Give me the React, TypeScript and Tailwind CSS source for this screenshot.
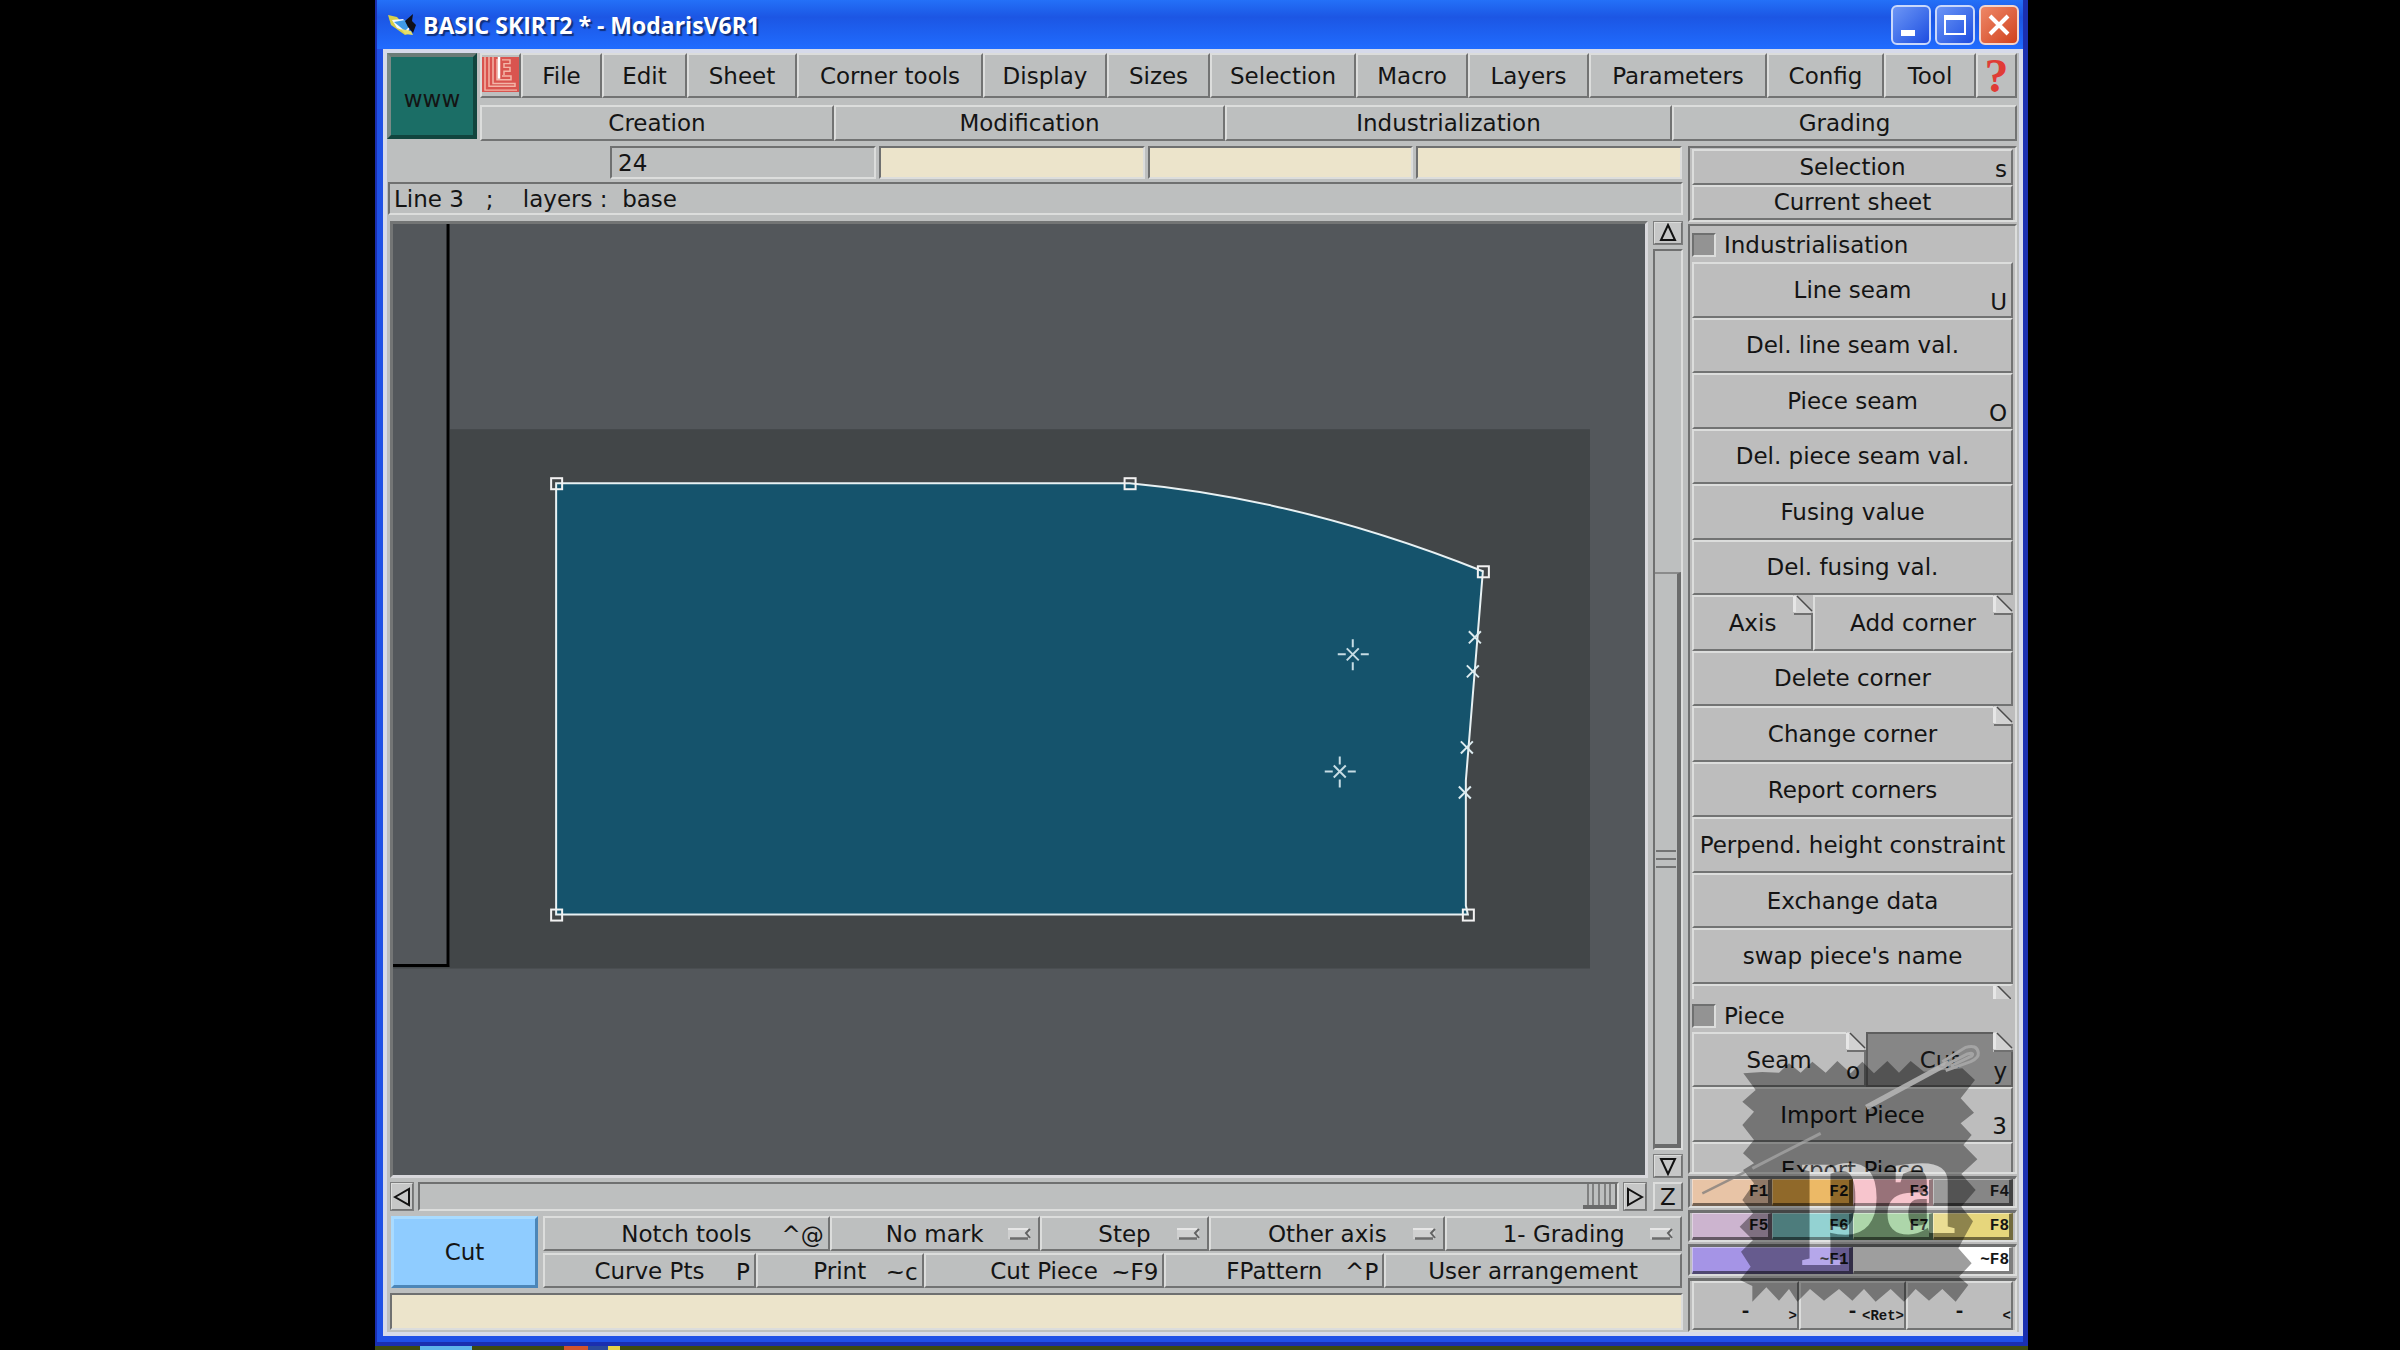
import { useState, type ReactNode } from 'react'

const RAISED =
  'border-2 border-t-[#dcdddc] border-l-[#dcdddc] border-r-[#727373] border-b-[#727373]'
const SUNKEN =
  'border-2 border-t-[#6f7070] border-l-[#6f7070] border-r-[#dcdddc] border-b-[#dcdddc]'

const MENUS = [
  { label: 'File', width: 'flex-77' },
  { label: 'Edit', width: 'flex-81' },
  { label: 'Sheet', width: 'flex-106' },
  { label: 'Corner tools', width: 'flex-182' },
  { label: 'Display', width: 'flex-120' },
  { label: 'Sizes', width: 'flex-99' },
  { label: 'Selection', width: 'flex-142' },
  { label: 'Macro', width: 'flex-108' },
  { label: 'Layers', width: 'flex-117' },
  { label: 'Parameters', width: 'flex-174' },
  { label: 'Config', width: 'flex-113' },
  { label: 'Tool', width: 'flex-88' },
]

const MODES = [
  { label: 'Creation', width: 'flex-350' },
  { label: 'Modification', width: 'flex-387' },
  { label: 'Industrialization', width: 'flex-443' },
  { label: 'Grading', width: 'flex-341' },
]

type Tool = {
  label: string
  width?: string
  hint?: string
  option?: boolean
  fold?: boolean
}

const TOOLBAR: Tool[][] = [
  [
    { label: 'Notch tools', width: 'flex-283', hint: '^@' },
    { label: 'No mark', width: 'flex-206', option: true },
    { label: 'Step', width: 'flex-166', option: true },
    { label: 'Other axis', width: 'flex-232', option: true },
    { label: '1- Grading', width: 'flex-233', option: true },
  ],
  [
    { label: 'Curve Pts', width: 'flex-209', hint: 'P' },
    { label: 'Print', width: 'flex-164', hint: '~c' },
    { label: 'Cut Piece', width: 'flex-237', hint: '~F9' },
    { label: 'FPattern', width: 'flex-216', hint: '^P' },
    { label: 'User arrangement', width: 'flex-294' },
  ],
]

const INDUSTRIALISATION: Tool[][] = [
  [{ label: 'Line seam', hint: 'U' }],
  [{ label: 'Del. line seam val.' }],
  [{ label: 'Piece seam', hint: 'O' }],
  [{ label: 'Del. piece seam val.' }],
  [{ label: 'Fusing value' }],
  [{ label: 'Del. fusing val.' }],
  [
    { label: 'Axis', width: 'flex-117', fold: true },
    { label: 'Add corner', width: 'flex-196', fold: true },
  ],
  [{ label: 'Delete corner' }],
  [{ label: 'Change corner', fold: true }],
  [{ label: 'Report corners' }],
  [{ label: 'Perpend. height constraint' }],
  [{ label: 'Exchange data' }],
  [{ label: "swap piece's name" }],
]

const FUNCTION_KEYS = [
  [
    { label: 'F1', color: 'bg-[#e8c4a6]' },
    { label: 'F2', color: 'bg-[#e8aa45]' },
    { label: 'F3', color: 'bg-[#f6b9c3]' },
    { label: 'F4', color: 'bg-[#868686]' },
  ],
  [
    { label: 'F5', color: 'bg-[#ccb4cf]' },
    { label: 'F6', color: 'bg-[#7cc8c8]' },
    { label: 'F7', color: 'bg-[#9bce98]' },
    { label: 'F8', color: 'bg-[#e6d67c]' },
  ],
  [
    { label: '~F1', color: 'bg-[#a594e6]' },
    { label: '~F8', color: 'bg-white' },
  ],
]

function Fold() {
  return (
    <svg
      className="absolute -top-0.5 -right-0.5"
      width="20"
      height="20"
      viewBox="0 0 20 20"
      aria-hidden="true"
    >
      <path d="M0 0H20V20H0z" fill="#bdbdbd" />
      <path d="M1 0H4L18 15V18H1z" fill="#d2d2d2" />
      <path d="M1.500 1V17" stroke="#e6e6e6" strokeWidth="3" />
      <path d="M4 1L19 16" stroke="#4b4b4b" strokeWidth="1.500" />
      <path d="M1 19H20" stroke="#707070" strokeWidth="2" />
    </svg>
  )
}

function OptionMark() {
  return (
    <svg
      className="absolute right-1.5 top-1/2 -translate-y-1/2"
      width="24"
      height="12"
      viewBox="0 0 24 12"
      aria-hidden="true"
    >
      <path d="M0 0H22V11H0z" fill="#cfd0d0" />
      <path d="M0 1H20" stroke="#e6e6e6" strokeWidth="2" />
      <path d="M2 10.500H20" stroke="#6c6d6d" strokeWidth="2.500" />
      <path d="M22 1L18 5L22 10" fill="none" stroke="#626363" strokeWidth="2" />
    </svg>
  )
}

function ToolButton({ label, width = 'flex-1', hint, option, fold }: Tool) {
  return (
    <button
      className={`relative min-w-0 whitespace-nowrap ${width} ${RAISED}`}
      aria-haspopup={option ? 'menu' : undefined}
    >
      {label}
      {hint && <span className="absolute right-1 bottom-0">{hint}</span>}
      {option && <OptionMark />}
      {fold && <Fold />}
    </button>
  )
}

function Section({ id, label }: { id: string; label: string }) {
  const [open, setOpen] = useState(false)
  return (
    <div className="flex shrink-0 items-center gap-2">
      <input
        id={id}
        type="checkbox"
        checked={open}
        onChange={(e) => setOpen(e.target.checked)}
        className={`size-6 appearance-none bg-[#939393] ${SUNKEN}`}
      />
      <label htmlFor={id}>{label}</label>
    </div>
  )
}

function ScrollArrow({ label, d, size }: { label: string; d: string; size: string }) {
  return (
    <button
      aria-label={label}
      className={`flex shrink-0 items-center justify-center bg-[#c6c7c7] outline outline-1 -outline-offset-1 outline-[#7d7e7e] ${size} ${RAISED}`}
    >
      <svg width="20" height="20" viewBox="0 0 20 20" aria-hidden="true">
        <path d={d} fill="none" stroke="#111" strokeWidth="2" />
      </svg>
    </button>
  )
}

function TitleBar() {
  return (
    <header className="flex h-[49px] items-center justify-between bg-linear-to-b from-[#2470f8] via-[#1c56e4] via-35% to-[#206cff] pr-1 pl-2.5">
      <div className="flex items-center gap-1.5">
        <svg width="30" height="24" viewBox="0 0 30 24" aria-hidden="true">
          <path d="M1 2L10 4L24 20L18 22L4 12z" fill="#d8d04a" />
          <path d="M5 7L16 6L24 14L20 19L10 15z" fill="#f4f8ff" />
          <path d="M7 9L18 7L23 13L18 18z" fill="#3f9be8" />
          <path d="M18 8L26 1L25 8L29 12L26 20L21 14z" fill="#101018" />
          <path d="M14 16L24 18L26 22L18 21z" fill="#e6df6a" />
        </svg>
        <h1 className="font-['Open_Sans','Noto_Sans',sans-serif] text-[23px] font-bold whitespace-nowrap text-white [text-shadow:2px_2px_1px_#10307c]">
          BASIC SKIRT2 * - ModarisV6R1
        </h1>
      </div>
      <div className="flex gap-1">
        <button
          aria-label="Minimize"
          className="size-10 rounded-md border-2 border-[#c9d8fb] bg-linear-to-br from-[#6d95f5] to-[#1e4be0] pt-4 pl-2"
        >
          <span className="block h-1.5 w-3.5 bg-white" />
        </button>
        <button
          aria-label="Maximize"
          className="flex size-10 items-center justify-center rounded-md border-2 border-[#c9d8fb] bg-linear-to-br from-[#6d95f5] to-[#1e4be0]"
        >
          <span className="block h-5 w-5.5 border-2 border-t-5 border-white" />
        </button>
        <button
          aria-label="Close"
          className="flex size-10 items-center justify-center rounded-md border-2 border-[#f3d5cc] bg-linear-to-br from-[#ee8766] to-[#d0401a]"
        >
          <svg width="24" height="24" viewBox="0 0 24 24" aria-hidden="true">
            <path d="M3 3L21 21M21 3L3 21" stroke="#fff" strokeWidth="4" />
          </svg>
        </button>
      </div>
    </header>
  )
}

function Menus() {
  return (
    <div className="flex gap-[3px] pr-0.5">
      <button className="h-[86px] w-[90px] shrink-0 border-4 border-t-[#6b7c77] border-r-[#11453e] border-b-[#11453e] border-l-[#7a8a86] bg-[#1b6e66] pt-1.5">
        www
      </button>
      <div className="flex min-w-0 flex-1 flex-col gap-[7px]">
        <nav className="flex h-[45px]">
          <button aria-label="About" className={`min-w-0 flex-37 pt-0.5 pb-1 ${RAISED}`}>
            <svg
              className="h-full w-full"
              viewBox="0 0 37 37"
              preserveAspectRatio="none"
              aria-hidden="true"
            >
              <path d="M0 0H37V37H0z" fill="#d9544f" />
              <g fill="none" stroke="#f3b5a8" strokeWidth="1.500">
                <path d="M3 0V35H35" />
                <path d="M7 0V31H33V28H11V0" />
                <path d="M15 2V24H29V20H20" />
                <path d="M20 3H28V7H22V11H28V15H22V19" />
              </g>
              <path d="M17 0V23" stroke="#fff" strokeWidth="2.500" />
            </svg>
          </button>
          {MENUS.map((m) => (
            <button key={m.label} className={`min-w-0 whitespace-nowrap ${m.width} ${RAISED}`}>
              {m.label}
            </button>
          ))}
          <button
            className={`min-w-0 flex-37 font-['Liberation_Serif',serif] text-[48px] leading-10 font-bold text-[#e03c36] ${RAISED}`}
          >
            ?
          </button>
        </nav>
        <nav className="flex h-9">
          {MODES.map((m) => (
            <button key={m.label} className={`min-w-0 ${m.width} ${RAISED}`}>
              {m.label}
            </button>
          ))}
        </nav>
      </div>
    </div>
  )
}

const HANDLES = [
  [556, 483],
  [1129, 483],
  [1482, 571],
  [1467, 914],
  [556, 914],
]
const NOTCHES = [
  [1474, 637],
  [1472, 671],
  [1466, 747],
  [1464, 792],
]
const MARKS = [
  [1352, 654],
  [1339, 771],
]

function Drawing() {
  return (
    <div className="flex min-w-0 flex-1 border-3 border-t-[#737575] border-r-[#d8d8dc] border-b-[#d8d8dc] border-l-[#737575] bg-[#53575b]">
      <svg
        className="min-h-0 w-full flex-1"
        viewBox="393 224 1251 946"
        preserveAspectRatio="xMinYMin meet"
        role="img"
        aria-label="Skirt pattern piece"
      >
        <path d="M450 429H1589V968H393V965H450z" fill="#424648" />
        <path d="M393 965H448V223" fill="none" stroke="#000" strokeWidth="3" />
        <path
          d="M556 483H1129Q1302 499 1482 571L1465 780V905L1467 914H556z"
          fill="#15536c"
          stroke="#e8f1f3"
          strokeWidth="2"
        />
        {HANDLES.map(([x, y]) => (
          <rect
            key={`${x}-${y}`}
            x={x - 5}
            y={y - 5}
            width="11"
            height="11"
            fill="none"
            stroke="#f2f2f2"
            strokeWidth="2"
          />
        ))}
        {NOTCHES.map(([x, y]) => (
          <path
            key={`${x}-${y}`}
            d={`M${x - 6} ${y - 6}l12 12m0 -12l-12 12`}
            stroke="#dcebef"
            strokeWidth="2"
          />
        ))}
        {MARKS.map(([x, y]) => (
          <path
            key={`${x}-${y}`}
            d={`M${x - 6} ${y - 6}l12 12m0 -12l-12 12M${x - 15} ${y}h8m15 0h8M${x} ${y - 15}v8m0 15v8`}
            stroke="#c6dce4"
            strokeWidth="2"
          />
        ))}
      </svg>
    </div>
  )
}

function VerticalScroll() {
  return (
    <div className="flex w-[30px] shrink-0 flex-col gap-1">
      <ScrollArrow label="Scroll up" d="M10 2L17 17H3z" size="h-6" />
      <div className={`flex flex-1 flex-col ${SUNKEN}`}>
        <div className="flex-36" />
        <div className="flex flex-64 flex-col items-center justify-center gap-1.5 border-t-2 border-r-4 border-b-4 border-t-[#8a8b8b] border-r-[#6a6b6b] border-b-[#6a6b6b]">
          <span className="h-0.5 w-5 bg-[#727373]" />
          <span className="h-0.5 w-5 bg-[#727373]" />
          <span className="h-0.5 w-5 bg-[#727373]" />
        </div>
      </div>
      <ScrollArrow label="Scroll down" d="M10 18L17 3H3z" size="h-6" />
    </div>
  )
}

function HorizontalScroll() {
  return (
    <div className="mt-1 flex h-[29px] gap-1 pr-0.5 pl-[3px]">
      <ScrollArrow label="Scroll left" d="M3 10L17 2V18z" size="w-6" />
      <div className={`flex flex-1 justify-end ${SUNKEN}`}>
        <div className="flex w-[34px] justify-evenly border-r-2 border-b-4 border-[#6a6b6b]">
          <span className="w-0.5 bg-[#808181]" />
          <span className="w-0.5 bg-[#808181]" />
          <span className="w-0.5 bg-[#808181]" />
          <span className="w-0.5 bg-[#808181]" />
          <span className="w-0.5 bg-[#808181]" />
        </div>
      </div>
      <ScrollArrow label="Scroll right" d="M17 10L3 2V18z" size="w-6" />
      <button className={`ml-0.5 w-[30px] leading-6 ${RAISED}`}>Z</button>
    </div>
  )
}

function Workspace() {
  const [size, setSize] = useState('24')
  return (
    <div className="flex min-w-0 flex-1 flex-col pb-0.5">
      <div className="mt-0.5 grid h-[33px] grid-cols-4 gap-[3px] pr-[3px] pl-[223px]">
        <input
          aria-label="Size"
          value={size}
          onChange={(e) => setSize(e.target.value)}
          className={`min-w-0 px-1.5 ${SUNKEN}`}
        />
        <input aria-label="Value 1" className={`min-w-0 bg-[#ece4cb] ${SUNKEN}`} />
        <input aria-label="Value 2" className={`min-w-0 bg-[#ece4cb] ${SUNKEN}`} />
        <input aria-label="Value 3" className={`min-w-0 bg-[#ece4cb] ${SUNKEN}`} />
      </div>
      <p
        className={`mt-[3px] mr-0.5 ml-px h-[33px] px-1 leading-[31px] whitespace-pre ${SUNKEN}`}
      >
        {'Line 3   ;    layers :  base'}
      </p>
      <div className="mt-1.5 flex flex-1 gap-[5px] pr-0.5 pl-[3px]">
        <Drawing />
        <VerticalScroll />
      </div>
      <HorizontalScroll />
      <div className="mt-[5px] flex h-[72px] gap-[5px] pr-[3px] pl-1">
        <button className="w-[147px] shrink-0 border-3 border-t-[#a9dbff] border-r-[#4c86b8] border-b-[#4c86b8] border-l-[#a9dbff] bg-[#8fccff]">
          Cut
        </button>
        <div className="flex min-w-0 flex-1 flex-col gap-0.5">
          {TOOLBAR.map((row, i) => (
            <div key={i} className="flex flex-1">
              {row.map((tool) => (
                <ToolButton key={tool.label} {...tool} />
              ))}
            </div>
          ))}
        </div>
      </div>
      <input
        aria-label="Message"
        className={`mt-[5px] mr-0.5 ml-[3px] h-[37px] bg-[#ece4cb] ${SUNKEN}`}
      />
    </div>
  )
}

function Panel({ className = '', children }: { className?: string; children: ReactNode }) {
  return (
    <div className={`flex flex-col px-0.5 ${SUNKEN} ${className}`}>{children}</div>
  )
}

// Pinked fabric swatch held by a safety pin
function Watermark() {
  return (
    <svg
      className="pointer-events-none absolute right-4.5 bottom-3 h-[290px] w-[270px]"
      viewBox="0 0 810 870"
      overflow="visible"
    >
      <mask id="swatch">
        <path d="M0 0H810V870H0z" fill="#fff" />
        <text
          id="monogram"
          x="214"
          y="608"
          fontSize="444"
          fontWeight="700"
          fontFamily="Liberation Serif, serif"
        >
          pa
        </text>
      </mask>
      <path
        mask="url(#swatch)"
        fill="#000"
        fillOpacity="0.380"
        d="M43 130L100 126L150 128L180 100L215 128L250 95L290 128L325 93L365 130L400 95L435 130L475 93L510 128L545 93L585 125L700 115L738 150L695 205L735 248L695 280L728 315L703 345L745 388L697 432L740 480L697 530L732 574L688 655L728 700L690 740L718 765L680 815L640 777L600 812L560 777L525 815L485 777L440 815L405 777L370 812L330 777L285 812L243 777L205 815L180 777L150 812L112 772L70 815V768L33 750L65 710L36 665L72 630L32 590L72 550L40 510L75 460L42 420L75 400L42 370L75 330L40 285L75 245L40 215L80 180z"
      />
      <mask id="letters">
        <use href="#monogram" className="invert" />
      </mask>
      <path d="M0 0H810V870H0z" fill="#fff" fillOpacity="0.180" mask="url(#letters)" />
      <path d="M-80 490L70 415" stroke="#777" strokeOpacity="0.700" strokeWidth="7" />
      <path d="M70 415L275 310" stroke="#aaa" strokeOpacity="0.700" strokeWidth="9" />
      <path d="M412 232L660 98" stroke="#b4b4b4" strokeOpacity="0.900" strokeWidth="16" />
      <path
        d="M640 95L710 52Q744 42 748 68Q750 84 725 95L650 122M650 105L715 72Q738 66 728 78L665 108"
        fill="none"
        stroke="#a4a4a4"
        strokeWidth="9"
      />
    </svg>
  )
}

function SidePanel() {
  return (
    <aside className="relative mr-0.5 flex w-[329px] shrink-0 flex-col gap-0.5 bg-[#bdbdbd] pt-0.5">
      <Panel className="h-[76px] pt-px">
        <div className="flex flex-1">
          <ToolButton label="Selection" hint="s" />
        </div>
        <div className="flex flex-1">
          <ToolButton label="Current sheet" />
        </div>
      </Panel>
      <Panel className="flex-1">
        <div className="flex h-9 items-center pt-0.5">
          <Section id="industrialisation" label="Industrialisation" />
        </div>
        <div className="flex flex-1 flex-col">
          {INDUSTRIALISATION.map((row) => (
            <div key={row[0].label} className="flex flex-1">
              {row.map((tool) => (
                <ToolButton key={tool.label} {...tool} />
              ))}
            </div>
          ))}
        </div>
        <div className="relative h-[15px] overflow-hidden border-2 border-b-0 border-t-[#dcdddc] border-r-[#bdbdbd] border-l-[#dcdddc]">
          <Fold />
        </div>
        <div className="flex h-[33px] items-center">
          <Section id="piece" label="Piece" />
        </div>
        <div className="flex h-[55px]">
          <ToolButton label="Seam" hint="o" width="flex-170" fold />
          <button className="relative flex-143 border-2 border-[#5e5e5e] bg-[#868686]">
            Cut
            <span className="absolute right-1 bottom-0">y</span>
            <Fold />
          </button>
        </div>
        <div className="flex h-[55px]">
          <ToolButton label="Import Piece" hint="3" />
        </div>
        <div className="h-[30px] overflow-hidden">
          <div className="flex h-[55px]">
            <ToolButton label="Export Piece" />
          </div>
        </div>
      </Panel>
      {FUNCTION_KEYS.map((row, i) => (
        <Panel key={i} className="h-[32px] border-t-3">
          <div className="flex flex-1">
            {row.map((key) => (
              <button
                key={key.label}
                className={`flex-1 border-t-1 border-r-4 border-b-3 border-l-1 border-t-white/40 border-r-black/50 border-b-black/50 border-l-white/40 text-right font-['Liberation_Mono',monospace] text-base leading-4 font-bold ${key.color}`}
              >
                {key.label}
              </button>
            ))}
          </div>
        </Panel>
      ))}
      <Panel className="h-[54px] border-t-3">
        <div className="flex flex-1 font-['Liberation_Mono',monospace] text-xl font-bold">
          {['>', '<Ret>', '<'].map((hint) => (
            <button key={hint} className={`relative flex-1 pt-3 ${RAISED}`}>
              -<span className="absolute right-0 bottom-0 text-sm leading-6">{hint}</span>
            </button>
          ))}
        </div>
      </Panel>
      <Watermark />
    </aside>
  )
}

export default function App() {
  return (
    <main className="flex min-h-screen flex-col bg-black pr-[372px] pl-[375px] font-['DejaVu_Sans',sans-serif] text-[23px] leading-7 text-[#141414]">
      <div className="flex flex-1 flex-col border-r-5 border-b-4 border-l-2 border-[#1a2fb0] bg-[#1f50e6]">
        <TitleBar />
        <div className="mb-1.5 ml-1.5 flex flex-1 flex-col border-4 border-[#d6daea] bg-[#bdbfbf]">
          <Menus />
          <div className="mt-[3px] flex flex-1 gap-[3px]">
            <Workspace />
            <SidePanel />
          </div>
        </div>
      </div>
      <footer className="flex h-1 bg-[#3c4a10] pl-[45px]">
        <span className="w-13 bg-[#5fb4ea]" />
        <span className="ml-23 w-6 bg-[#d2552c]" />
        <span className="w-5 bg-[#2a4a9c]" />
        <span className="w-3 bg-[#e6d24a]" />
      </footer>
    </main>
  )
}
